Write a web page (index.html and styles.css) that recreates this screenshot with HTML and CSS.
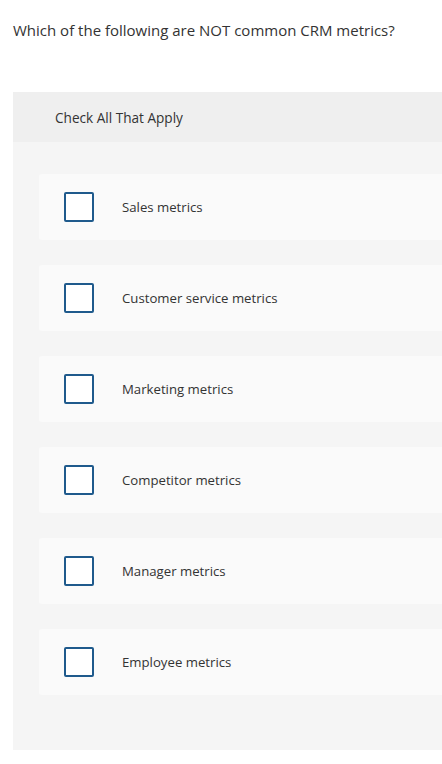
FILE: index.html
```html
<!DOCTYPE html>
<html>
<head>
<meta charset="utf-8">
<link rel="stylesheet" href="styles.css">
</head>
<body>
<div class="page">
  <p class="question">Which of the following are NOT common CRM metrics?</p>
  <div class="panel">
    <div class="panel-head">Check All That Apply</div>
    <div class="panel-body">
      <label class="option"><span class="box"></span><span class="label">Sales metrics</span></label>
      <label class="option"><span class="box"></span><span class="label">Customer service metrics</span></label>
      <label class="option"><span class="box"></span><span class="label">Marketing metrics</span></label>
      <label class="option"><span class="box"></span><span class="label">Competitor metrics</span></label>
      <label class="option"><span class="box"></span><span class="label">Manager metrics</span></label>
      <label class="option"><span class="box"></span><span class="label">Employee metrics</span></label>
    </div>
  </div>
</div>
</body>
</html>
```
FILE: styles.css
```css
html, body {
  margin: 0;
  padding: 0;
  background: #ffffff;
  font-family: "Open Sans", "Liberation Sans", sans-serif;
  color: #333333;
}
.page {
  padding: 20px 0 0 13px;
  overflow: hidden;
  width: 429px;
}
.question {
  margin: 0;
  font-size: 15px;
  line-height: 20px;
  color: #333333;
}
.panel {
  margin-top: 52px;
  width: 460px;
}
.panel-head {
  height: 50px;
  box-sizing: border-box;
  padding-left: 42px;
  display: flex;
  align-items: center;
  background: #efefef;
  font-size: 13.6px;
  color: #333;
}
.panel-body {
  background: #f5f5f5;
  padding: 32px 0 55px 26px;
  display: flex;
  flex-direction: column;
  gap: 25px;
}
.option {
  display: flex;
  align-items: center;
  height: 66px;
  background: #fafafa;
  border-radius: 3px;
  padding-left: 25px;
}
.box {
  width: 30px;
  height: 30px;
  box-sizing: border-box;
  border: 2px solid #1f5a8c;
  border-radius: 2px;
  background: #fff;
  flex: none;
}
.label {
  margin-left: 28px;
  font-size: 13.2px;
  color: #333;
}
```
